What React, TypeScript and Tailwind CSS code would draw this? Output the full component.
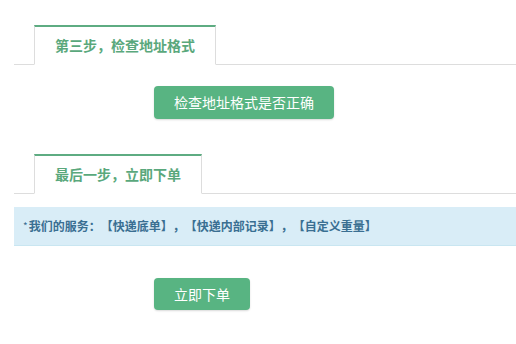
import React from "react";

const font = { fontFamily: '"Noto Sans CJK SC", "Noto Sans", sans-serif' };

function Tab({ label }: { label: string }) {
  return (
    <div className="flex border-b border-[#dddddd] pl-[20px]">
      <div className="-mb-px flex h-[40px] items-center border-x border-t-2 border-x-[#dddddd] border-t-[#5eac82] border-b border-b-white bg-white px-[20px] text-[14px] font-bold text-[#5aa87c]">
        {label}
      </div>
    </div>
  );
}

export default function App() {
  return (
    <div className="min-h-[344px] w-[516px] bg-white pl-[14px] pt-[25px] [text-spacing-trim:space-all]" style={font}>
      <Tab label="第三步，检查地址格式" />
      <div className="ml-[140px] mt-[21px]">
        <button className="flex h-[33px] w-[180px] items-center justify-center rounded-[4px] bg-[#58b482] text-[14px] text-white shadow-[0_1px_2px_rgba(0,0,0,0.15)]">
          检查地址格式是否正确
        </button>
      </div>
      <div className="mt-[35px]">
        <Tab label="最后一步，立即下单" />
      </div>
      <div className="mt-[13px] flex h-[39px] items-center border-b border-[#c9e6f1] bg-[#d9edf7] pl-[9px] text-[12px] font-bold text-[#3a6f92] [text-spacing-trim:space-all]">
        <span className="mr-[1px] mt-[11px] self-start text-[10px] font-normal">*</span>
        <span className="[text-spacing-trim:space-all]">我们的服务：【快递底单】，【快递内部记录】，【自定义重量】</span>
      </div>
      <div className="ml-[140px] mt-[32px]">
        <button className="flex h-[32px] w-[96px] items-center justify-center rounded-[4px] bg-[#58b482] text-[14px] text-white shadow-[0_1px_2px_rgba(0,0,0,0.15)]">
          立即下单
        </button>
      </div>
    </div>
  );
}
